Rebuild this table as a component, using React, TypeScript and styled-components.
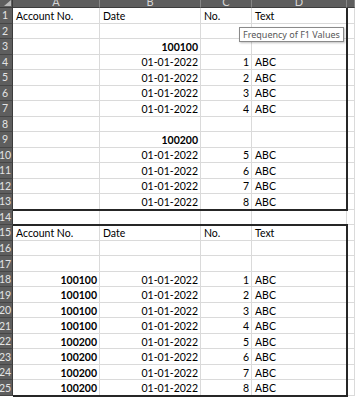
import React from 'react';
import styled, { createGlobalStyle, css } from 'styled-components';

const Global = createGlobalStyle`
    html, body {
        margin: 0;
        padding: 0;
        background: #ffffff;
        overflow: hidden;
    }
`;

const ROW_H = 15.52;

const Sheet = styled.div`
    position: relative;
    display: grid;
    grid-template-columns: 13px 87px 101px 51px 95px 1fr;
    grid-template-rows: 8px repeat(25, ${ROW_H}px);
    width: 355px;
    height: 399px;
    overflow: hidden;
    font: 400 10.5px Lato, "Liberation Sans", sans-serif;
    color: #000;
`;

interface PlaceProps {
    $row: number
    $col: number
}

const place = css<PlaceProps>`
    grid-row: ${p => p.$row};
    grid-column: ${p => p.$col};
`;

const Corner = styled.div`
    grid-row: 1;
    grid-column: 1;
    background: #5e5e5e;
    border-right: 1px solid #3c3c3c;
    border-bottom: 1px solid #3c3c3c;
    position: relative;
    overflow: hidden;

    &::after {
        content: '';
        position: absolute;
        right: 1px;
        bottom: 1px;
        border-left: 7px solid transparent;
        border-bottom: 6px solid #b9b9b9;
    }
`;

const ColHead = styled.div<PlaceProps>`
    ${place}
    background: #5e5e5e;
    color: #d6d6d6;
    border-right: 1px solid #868686;
    border-bottom: 1px solid #3c3c3c;
    display: flex;
    justify-content: center;
    align-items: flex-end;
    overflow: hidden;
    font-size: 11px;
    line-height: 8px;
    padding-bottom: 1px;
    box-sizing: border-box;
`;

const RowHead = styled.div<PlaceProps>`
    ${place}
    background: #5e5e5e;
    color: #e4e4e4;
    border-bottom: 1px solid #464646;
    border-right: 1px solid #3c3c3c;
    display: flex;
    align-items: center;
    justify-content: center;
    padding-right: 2px;
    font-size: 10.5px;
    box-sizing: border-box;
    overflow: hidden;
    white-space: nowrap;
`;

interface CellProps extends PlaceProps {
    $right?: boolean
    $bold?: boolean
}

const Cell = styled.div<CellProps>`
    ${place}
    border-right: 1px solid #dadada;
    border-bottom: 1px solid #dadada;
    box-sizing: border-box;
    display: flex;
    align-items: center;
    padding: 1px 3px 0 3px;
    white-space: nowrap;
    overflow: hidden;
    justify-content: ${p => (p.$right ? 'flex-end' : 'flex-start')};
    font-weight: ${p => (p.$bold ? 700 : 400)};
    ${p => p.$right && css`padding-right: 2px;`}
`;

interface FrameProps {
    $rows: string
    $top?: boolean
}

const Frame = styled.div<FrameProps>`
    grid-column: 2 / 6;
    grid-row: ${p => p.$rows};
    border-right: 2px solid #262626;
    border-bottom: 2px solid #262626;
    border-top: ${p => (p.$top ? '2px solid #262626' : '0')};
    margin-top: ${p => (p.$top ? '-1px' : '0')};
    margin-bottom: -1px;
    margin-right: -1px;
    pointer-events: none;
    z-index: 1;
`;

const Tooltip = styled.div`
    position: absolute;
    left: 239px;
    top: 27px;
    height: 15px;
    padding: 0 3px;
    box-sizing: border-box;
    background: #ffffff;
    border: 1px solid #8a8a8a;
    box-shadow: 1px 1px 2px rgba(0, 0, 0, 0.25);
    color: #575757;
    font: 400 9px "Noto Sans", "Open Sans", sans-serif;
    line-height: 13px;
    white-space: nowrap;
    z-index: 2;
`;

type Row = [string, string, string, string, ('a' | 'b')?];

const rows: Row[] = [
    ['Account No.', 'Date', 'No.', 'Text'],
    ['', '', '', ''],
    ['', '100100', '', '', 'b'],
    ['', '01-01-2022', '1', 'ABC'],
    ['', '01-01-2022', '2', 'ABC'],
    ['', '01-01-2022', '3', 'ABC'],
    ['', '01-01-2022', '4', 'ABC'],
    ['', '', '', ''],
    ['', '100200', '', '', 'b'],
    ['', '01-01-2022', '5', 'ABC'],
    ['', '01-01-2022', '6', 'ABC'],
    ['', '01-01-2022', '7', 'ABC'],
    ['', '01-01-2022', '8', 'ABC'],
    ['', '', '', ''],
    ['Account No.', 'Date', 'No.', 'Text'],
    ['', '', '', ''],
    ['', '', '', ''],
    ['100100', '01-01-2022', '1', 'ABC', 'a'],
    ['100100', '01-01-2022', '2', 'ABC', 'a'],
    ['100100', '01-01-2022', '3', 'ABC', 'a'],
    ['100100', '01-01-2022', '4', 'ABC', 'a'],
    ['100200', '01-01-2022', '5', 'ABC', 'a'],
    ['100200', '01-01-2022', '6', 'ABC', 'a'],
    ['100200', '01-01-2022', '7', 'ABC', 'a'],
    ['100200', '01-01-2022', '8', 'ABC', 'a'],
];

const isHeader = (r: Row) => r[0] === 'Account No.';

export default function App() {
    return (
        <>
            <Global />
            <Sheet>
                <Corner />
                {['A', 'B', 'C', 'D', ''].map((l, i) => (
                    <ColHead key={i} $row={1} $col={i + 2}>{l}</ColHead>
                ))}
                {rows.map((r, i) => {
                    const head = isHeader(r);
                    const row = i + 2;
                    return (
                        <React.Fragment key={i}>
                            <RowHead $row={row} $col={1}>{i + 1}</RowHead>
                            <Cell $row={row} $col={2} $right={!head} $bold={r[4] === 'a'}>{r[0]}</Cell>
                            <Cell $row={row} $col={3} $right={!head} $bold={r[4] === 'b'}>{r[1]}</Cell>
                            <Cell $row={row} $col={4} $right={!head}>{r[2]}</Cell>
                            <Cell $row={row} $col={5}>{r[3]}</Cell>
                            <Cell $row={row} $col={6} />
                        </React.Fragment>
                    );
                })}
                <Frame $rows="2 / 15" />
                <Frame $rows="16 / 27" $top />
                <Tooltip>Frequency of F1 Values</Tooltip>
            </Sheet>
        </>
    );
}
